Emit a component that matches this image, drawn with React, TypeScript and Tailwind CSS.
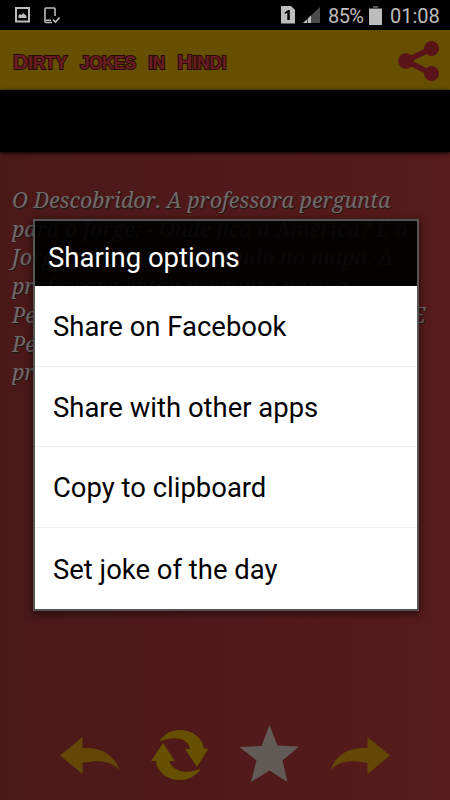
import React from 'react';

interface ShareOption {
  id: string;
  label: string;
}

const shareOptions: ShareOption[] = [
  { id: 'facebook', label: 'Share on Facebook' },
  { id: 'other', label: 'Share with other apps' },
  { id: 'clipboard', label: 'Copy to clipboard' },
  { id: 'daily', label: 'Set joke of the day' },
];

const titleWords = ['Dirty', 'jokes', 'in', 'Hindi'];

const jokeLines = [
  'O Descobridor. A professora pergunta',
  'para o Jorge: - Onde fica a América? E o',
  'Jorge responde apontando no mapa. A',
  'professora então pergunta para o',
  'Pedrinho: - Quem descobriu a América? E',
  'Pedrinho responde:',
  'professora, foi o Jorge.',
];

const StatusBar: React.FC = () => (
  <div className="flex h-[30px] shrink-0 items-center bg-black text-[#bdbdbd]">
    <svg className="ml-[15px] h-4 w-[15px]" viewBox="0 0 15 16" fill="none">
      <rect x="1" y="1" width="13" height="13.5" stroke="currentColor" strokeWidth="2" />
      <path d="M3.5 11V8.5L5 7l1.5 1L8 6l2 1.5L11.5 9v2z" fill="currentColor" />
    </svg>
    <svg className="ml-[14px] h-[17px] w-4" viewBox="0 0 16 17" fill="none" stroke="currentColor">
      <path d="M11 9V1.8Q11 1 10 1H2Q1 1 1 2v12.5q0 1 1 1h6M2 13.3h5" strokeWidth="1.6" />
      <path d="M9 12.5l2.5 2.5 4-4.5" strokeWidth="1.6" />
    </svg>
    <svg className="ml-auto h-[18px] w-[14px]" viewBox="0 0 14 18">
      <path d="M0 0h10l4 4v13.5H0z" fill="currentColor" />
      <path d="M3.8 6.2L7.2 4h1.6v10H6.3V6.8L3.8 8z" fill="#000" />
    </svg>
    <svg className="ml-2 h-4 w-[17px]" viewBox="0 0 17 16">
      <path d="M0 16L17 0v16z" fill="#4a4a4a" />
      <path d="M0 16l4-3.8V16zM5 16v-4.8l3-2.8V16z" fill="currentColor" />
    </svg>
    <span className="ml-2 w-[39px] pt-[2px] text-[20px] leading-none tracking-[-0.6px] whitespace-nowrap">85%</span>
    <svg className="ml-[2px] h-[19px] w-[13px]" viewBox="0 0 13 19">
      <path d="M4 0h5v2h4v3H0V2h4z" fill="#555" />
      <path d="M0 3h13v16H0z" fill="currentColor" />
    </svg>
    <span className="ml-2 mr-[11px] w-[49px] pt-[2px] text-[20px] leading-none whitespace-nowrap">01:08</span>
  </div>
);

const AppHeader: React.FC = () => (
  <header className="flex h-[60px] shrink-0 items-center justify-between bg-[#665000] pl-[13px] pr-[10px]">
    <h1 className="flex items-baseline gap-[13px] pt-1 font-['Liberation_Sans',sans-serif] text-[17.5px] leading-[22px] font-bold tracking-[-0.2px] whitespace-nowrap text-[#6b1c22] uppercase [paint-order:stroke_fill] [-webkit-text-stroke:2px_#260c08]">
      {titleWords.map(word => (
        <span
          key={word}
          className={word[0] === word[0].toUpperCase() ? 'first-letter:text-[21px]' : 'tracking-[-0.8px]'}
        >
          {word}
        </span>
      ))}
    </h1>
    <svg className="mt-[2px] h-[42px] w-[42px]" viewBox="0 0 42 42" fill="#5a1318">
      <path d="M33.5 8.5L8 21l25.5 12.5" fill="none" stroke="#5a1318" strokeWidth="5.5" />
      <circle cx="33.5" cy="8.5" r="7.5" />
      <circle cx="8" cy="21" r="7.8" />
      <circle cx="33.5" cy="33.5" r="7.5" />
    </svg>
  </header>
);

const Toolbar: React.FC = () => (
  <nav className="mt-auto flex h-[90px] items-center justify-between pl-[60px] pr-[60px]">
    <svg className="h-[37px] w-[60px]" viewBox="0 0 60 37">
      <path d="M0 18.5L22.5 0v11C38 10 53 15 59.5 33 50 23 38 23 22.5 26v11z" fill="#644706" />
    </svg>
    <svg className="h-[52px] w-[58px]" viewBox="0 0 58 52" fill="#665000">
      <path d="M8 12.7C14 4 21 1 29 1c13 0 22 8 24 18.5h4.5L46 38 34 20h5C38 9 22 6 8 12.7z" />
      <path d="M50 39.5C44 48 37 51 29 51 16 51 6 43 5 32H0l12-18 12 18h-6C22 42 34 46 50 39.5z" />
    </svg>
    <svg className="mb-[2px] h-[58px] w-[60px]" viewBox="0 0 60 58">
      <path d="M30.5 0l8 20.5 21.5 1-16.5 14L48.5 57 30.5 45.5 12 57 17.5 35.5 .5 22l22-1z" fill="#625a57" />
    </svg>
    <svg className="h-[37px] w-[60px]" viewBox="0 0 60 37">
      <path d="M60 18.5L37.5 0v11C22 10 7 15 .5 33 10 23 22 23 37.5 26v11z" fill="#644706" />
    </svg>
  </nav>
);

const ShareDialog: React.FC = () => (
  <div
    role="dialog"
    className="absolute top-[219px] left-[33px] h-[392px] w-[386px] border-2 border-[#535653] shadow-[0_2px_7px_1px_rgba(0,0,0,0.5)]"
  >
    <h2 className="flex h-[65px] items-center bg-black/92 pt-[9px] pl-[13px] text-[27.5px] leading-none whitespace-nowrap text-white">
      Sharing options
    </h2>
    <ul className="bg-white">
      {shareOptions.map(option => (
        <li key={option.id} className="h-[80.7px] border-b border-[#eeeeee] last:h-[80.9px] last:border-b-0">
          <button className="flex h-full w-full items-center pt-1 pl-[18px] text-left text-[27.45px] leading-[27.5px] whitespace-nowrap text-black">
            {option.label}
          </button>
        </li>
      ))}
    </ul>
  </div>
);

const App: React.FC = () => {
  return (
    <div className="relative flex h-[800px] w-[450px] flex-col overflow-hidden bg-[#511919] font-[Roboto,sans-serif]">
      <StatusBar />
      <AppHeader />
      <div className="relative z-10 h-[62px] shrink-0 bg-black shadow-[0_1px_4px_#000]" />
      <main className="flex flex-1 flex-col bg-linear-to-r from-[#4b1818] to-[#571b1b]">
        <div className="pt-[34px] pl-3 font-['Noto_Serif','DejaVu_Serif_Condensed','DejaVu_Serif',serif] text-[21.45px] leading-[28.7px] whitespace-nowrap text-[#706b6b] italic [font-kerning:none] [text-shadow:1px_1px_1px_#1a1a1a]">
          {jokeLines.map(line => (
            <p key={line}>{line}</p>
          ))}
        </div>
        <Toolbar />
      </main>
      <ShareDialog />
    </div>
  );
};

export default App;
